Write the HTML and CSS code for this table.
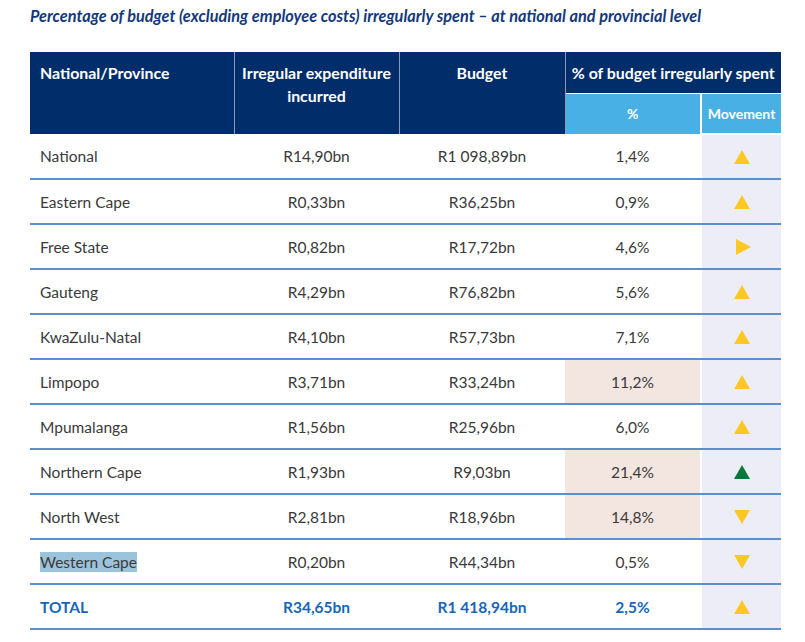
FILE: index.html
```html
<!DOCTYPE html>
<html>
<head>
<meta charset="utf-8">
<link rel="stylesheet" href="styles.css">
</head>
<body>
<div class="page">
  <h1 class="title">Percentage of budget (excluding employee costs) irregularly spent – at national and provincial level</h1>
  <table class="data">
    <colgroup>
      <col class="c1"><col class="c2"><col class="c3"><col class="c4"><col class="c5">
    </colgroup>
    <thead>
      <tr>
        <th rowspan="2" class="h-left">National/Province</th>
        <th rowspan="2">Irregular expenditure incurred</th>
        <th rowspan="2">Budget</th>
        <th colspan="2" class="h-group">% of budget irregularly spent</th>
      </tr>
      <tr class="sub">
        <th class="sub-pct">%</th>
        <th class="sub-mov">Movement</th>
      </tr>
    </thead>
    <tbody>
      <tr><td class="name">National</td><td>R14,90bn</td><td>R1 098,89bn</td><td>1,4%</td><td class="mov"><span class="tri up"></span></td></tr>
      <tr><td class="name">Eastern Cape</td><td>R0,33bn</td><td>R36,25bn</td><td>0,9%</td><td class="mov"><span class="tri up"></span></td></tr>
      <tr><td class="name">Free State</td><td>R0,82bn</td><td>R17,72bn</td><td>4,6%</td><td class="mov"><span class="tri right"></span></td></tr>
      <tr><td class="name">Gauteng</td><td>R4,29bn</td><td>R76,82bn</td><td>5,6%</td><td class="mov"><span class="tri up"></span></td></tr>
      <tr><td class="name">KwaZulu-Natal</td><td>R4,10bn</td><td>R57,73bn</td><td>7,1%</td><td class="mov"><span class="tri up"></span></td></tr>
      <tr><td class="name">Limpopo</td><td>R3,71bn</td><td>R33,24bn</td><td class="hot">11,2%</td><td class="mov"><span class="tri up"></span></td></tr>
      <tr><td class="name">Mpumalanga</td><td>R1,56bn</td><td>R25,96bn</td><td>6,0%</td><td class="mov"><span class="tri up"></span></td></tr>
      <tr><td class="name">Northern Cape</td><td>R1,93bn</td><td>R9,03bn</td><td class="hot">21,4%</td><td class="mov"><span class="tri up green"></span></td></tr>
      <tr><td class="name">North West</td><td>R2,81bn</td><td>R18,96bn</td><td class="hot">14,8%</td><td class="mov"><span class="tri down"></span></td></tr>
      <tr><td class="name"><span class="sel">Western Cape</span></td><td>R0,20bn</td><td>R44,34bn</td><td>0,5%</td><td class="mov"><span class="tri down"></span></td></tr>
      <tr class="total"><td class="name">TOTAL</td><td>R34,65bn</td><td>R1 418,94bn</td><td>2,5%</td><td class="mov"><span class="tri up"></span></td></tr>
    </tbody>
  </table>
</div>
</body>
</html>
```

FILE: styles.css
```css
html, body {
  margin: 0;
  padding: 0;
  background: #ffffff;
}

.page {
  padding: 6px 0 0 30px;
  font-family: Lato, "Open Sans", "Liberation Sans", sans-serif;
}

.title {
  margin: 0 0 26px 0;
  font-size: 16.3px;
  line-height: 20px;
  font-weight: 700;
  font-style: italic;
  color: #14397a;
  white-space: nowrap;
}

.data {
  border-collapse: collapse;
  table-layout: fixed;
  width: 751px;
  font-size: 15.5px;
  color: #3a3a3a;
}

.c1 { width: 204px; }
.c2 { width: 165px; }
.c3 { width: 166px; }
.c4 { width: 136px; }
.c5 { width: 80px; }

thead th {
  background: #022d6b;
  color: #ffffff;
  font-weight: 700;
  font-size: 15.9px;
  line-height: 23px;
  vertical-align: top;
  text-align: center;
  padding: 9px 4px 0 4px;
  border-left: 1px solid #8a9ab8;
  height: 32px;
}

thead th.h-left {
  text-align: left;
  padding-left: 10px;
  border-left: none;
}

thead th.h-group {
  vertical-align: middle;
  padding: 0 4px;
  height: 41px;
}

thead tr.sub th {
  background: #48b0e4;
  height: 39px;
  padding: 0;
  vertical-align: middle;
  font-size: 14px;
  line-height: 18px;
  border-top: 1px solid #ffffff;
  border-left: none;
}

thead tr.sub th.sub-mov {
  border-left: 2px solid #ffffff;
}

thead tr.sub th.sub-pct {
  border-left: 1px solid #8a9ab8;
}

tbody td {
  height: 43px;
  padding: 0;
  text-align: center;
  vertical-align: middle;
  border-bottom: 2px solid #5b8fcd;
  line-height: 20px;
}

tbody td.name {
  text-align: left;
  padding-left: 10px;
}

tbody td.hot {
  background: #f3e5df;
}

tbody td.mov {
  background: #ededf7;
  border-left: 2px solid #ffffff;
}

tbody tr:first-child td.mov {
  border-top: 2px solid #ffffff;
}

.sel {
  background: #9cc3dc;
  padding: 1px 0;
}

tr.total td {
  color: #1766b8;
  font-weight: 700;
}

.tri {
  display: block;
  width: 0;
  height: 0;
  margin: 0 auto;
}

.tri.up {
  border-left: 8.5px solid transparent;
  border-right: 8.5px solid transparent;
  border-bottom: 14px solid #fec824;
}

.tri.up.green {
  border-bottom-color: #08773a;
}

.tri.down {
  border-left: 8.5px solid transparent;
  border-right: 8.5px solid transparent;
  border-top: 14px solid #fec824;
}

.tri.right {
  border-top: 8px solid transparent;
  border-bottom: 8px solid transparent;
  border-left: 15px solid #fec824;
  position: relative;
  left: 2px;
}
```
